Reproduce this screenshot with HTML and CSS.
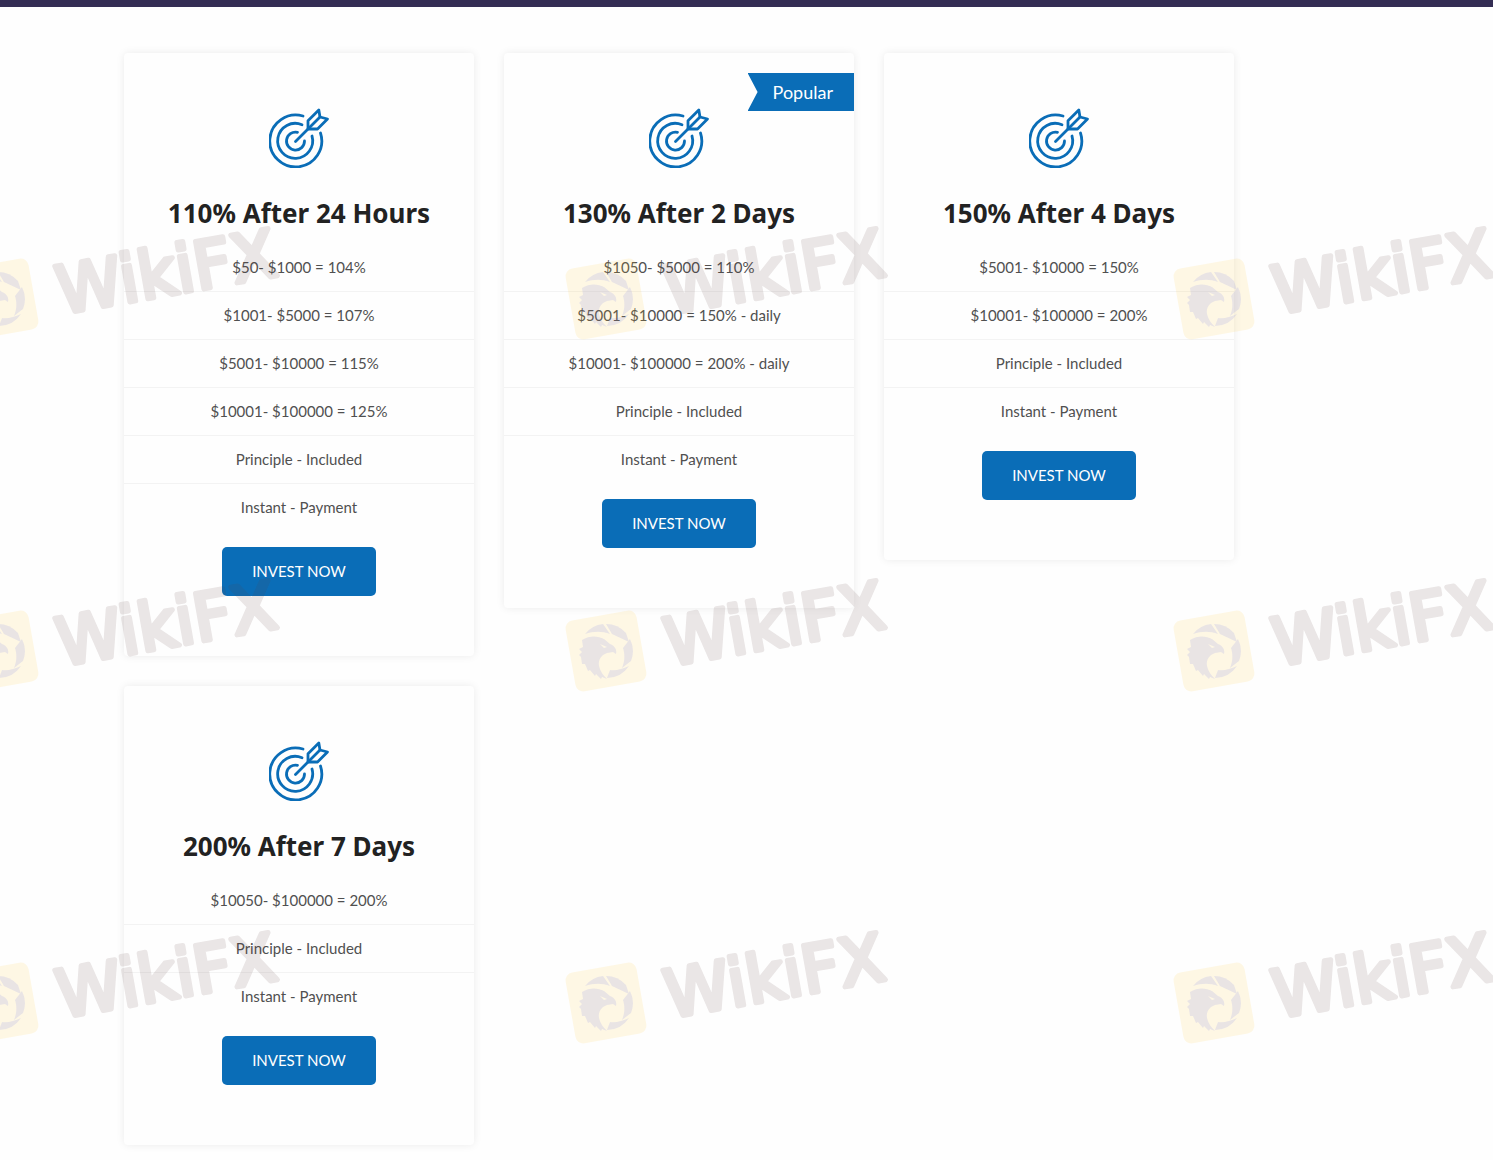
FILE: index.html
```html
<!DOCTYPE html>
<html lang="en">
<head>
  <meta charset="UTF-8">
  <meta name="viewport" content="width=device-width, initial-scale=1.0">
  <title>Investment Plans</title>
  <link rel="stylesheet" href="styles.css">
</head>
<body>

  <!-- shared icon -->
  <svg class="sprite" aria-hidden="true">
    <symbol id="target" viewBox="0 0 60 60">
      <g fill="none" stroke="#0a6db7" stroke-width="2.8" stroke-linecap="round" stroke-linejoin="round">
        <path d="M34 8A26 26 0 1 0 51.500 25"/>
        <path d="M33 16.700A17.500 17.500 0 1 0 43 28"/>
        <path d="M28.500 24.300A9 9 0 1 0 35.500 33"/>
        <path d="M26.500 33.500L50.500 9.500"/>
        <path d="M39 21V12.700L49.800 2L51 9L58.500 11L48.500 21Z"/>
      </g>
    </symbol>
  </svg>

  <header class="top-bar"></header>

  <main class="plans">
    <section class="plan">
      <svg class="plan-icon" aria-hidden="true"><use href="#target"/></svg>
      <h3>110% After 24 Hours</h3>
      <ul>
        <li>$50- $1000 = 104%</li>
        <li>$1001- $5000 = 107%</li>
        <li>$5001- $10000 = 115%</li>
        <li>$10001- $100000 = 125%</li>
        <li>Principle - Included</li>
        <li>Instant - Payment</li>
      </ul>
      <a href="#" class="btn">INVEST NOW</a>
    </section>

    <section class="plan">
      <span class="ribbon">Popular</span>
      <svg class="plan-icon" aria-hidden="true"><use href="#target"/></svg>
      <h3>130% After 2 Days</h3>
      <ul>
        <li>$1050- $5000 = 110%</li>
        <li>$5001- $10000 = 150% - daily</li>
        <li>$10001- $100000 = 200% - daily</li>
        <li>Principle - Included</li>
        <li>Instant - Payment</li>
      </ul>
      <a href="#" class="btn">INVEST NOW</a>
    </section>

    <section class="plan">
      <svg class="plan-icon" aria-hidden="true"><use href="#target"/></svg>
      <h3>150% After 4 Days</h3>
      <ul>
        <li>$5001- $10000 = 150%</li>
        <li>$10001- $100000 = 200%</li>
        <li>Principle - Included</li>
        <li>Instant - Payment</li>
      </ul>
      <a href="#" class="btn">INVEST NOW</a>
    </section>

    <section class="plan">
      <svg class="plan-icon" aria-hidden="true"><use href="#target"/></svg>
      <h3>200% After 7 Days</h3>
      <ul>
        <li>$10050- $100000 = 200%</li>
        <li>Principle - Included</li>
        <li>Instant - Payment</li>
      </ul>
      <a href="#" class="btn">INVEST NOW</a>
    </section>
  </main>

  <!-- watermark over the whole page -->
  <svg class="watermark" aria-hidden="true">
    <defs>
      <pattern id="mark" x="560" y="200" width="608" height="352" patternUnits="userSpaceOnUse">
        <g transform="translate(46 99)">
          <rect class="mark-tile" x="-36" y="-36" width="72" height="72" rx="8" transform="rotate(-10)"/>
          <g class="mark-bird">
            <path d="M-21 -17A27 27 0 0 1 -3 -27L4 -17C-4 -20 -12 -20 -21 -17Z"/>
            <path d="M0 -27A27 27 0 0 1 20 -18L23 -9L6 -17Z"/>
            <path d="M24 -12A27 27 0 0 1 25 10L16 17C19 10 19 3 17 -3Z"/>
            <path d="M23 15A27 27 0 0 1 1 27L4 19C10 20 16 18 23 15Z"/>
            <path fill-rule="evenodd" d="M-24 -11C-16 -16 -8 -15 -2 -12L4 -7C9 -5 11 -1 10 3L7 1L1 2C-5 4 -8 9 -7 15C-6 20 -3 24 1 28L-4 26L-5 28L-10 23L-11 25L-16 19L-18 20L-21 13L-24 13L-25 6L-27 4L-24 1L-27 -2L-23 -4ZM-6 -7L1 -4L-2 -3Z"/>
          </g>
        </g>
        <text class="mark-text" transform="translate(109 114) rotate(-10)">WikiFX</text>
      </pattern>
    </defs>
    <rect width="100%" height="100%" fill="url(#mark)"/>
  </svg>

</body>
</html>
```
FILE: styles.css
```css
* {
  box-sizing: border-box;
}

body {
  position: relative;
  margin: 0;
  background: #fefefe;
  color: #505050;
  font-family: Lato, "Liberation Sans", sans-serif;
  font-size: 15px;
  line-height: 24px;
}

.sprite {
  display: none;
}

.top-bar {
  height: 7px;
  background: #342d54;
}

.plans {
  display: grid;
  grid-template-columns: repeat(auto-fill, 350px);
  gap: 30px;
  align-items: start;
  max-width: 1249px;
  padding: 46px 15px 15px 124px;
}

.plan {
  position: relative;
  padding: 55px 0 60px;
  background: #fefefe;
  border-radius: 4px;
  box-shadow: 0 0 8px rgba(0, 0, 0, 0.08);
  text-align: center;
}

.plan-icon {
  display: block;
  width: 60px;
  height: 60px;
  margin: 0 auto;
}

.plan h3 {
  margin: 27px 0 13px;
  color: #222;
  font-family: "Noto Sans", sans-serif;
  font-size: 26px;
  font-weight: bold;
  line-height: 36px;
}

.plan ul {
  margin: 0 0 15px;
  padding: 0;
  list-style: none;
}

.plan li {
  height: 48px;
  padding: 11px 0;
  border-bottom: 1px solid #f3f3f3;
}

.plan li:last-child {
  border-bottom: none;
}

.btn {
  display: inline-block;
  padding: 12px 30px;
  background: #0a6db7;
  border-radius: 5px;
  color: #fff;
  line-height: 25px;
  text-decoration: none;
  vertical-align: top;
}

.btn:hover {
  background: #085c9f;
}

.ribbon {
  position: absolute;
  top: 20px;
  right: 0;
  padding: 0 21px 0 25px;
  background: #0a6db7;
  clip-path: polygon(0 0, 100% 0, 100% 100%, 0 100%, 10px 50%);
  color: #fff;
  font-size: 18px;
  line-height: 38px;
}

.watermark {
  position: absolute;
  top: 0;
  left: 0;
  width: 100%;
  height: 100%;
  pointer-events: none;
}

.mark-tile {
  fill: #ffc828;
  opacity: 0.12;
}

.mark-bird {
  fill: #2c38e6;
  opacity: 0.1;
}

.mark-text {
  fill: #553232;
  stroke: #553232;
  stroke-width: 5px;
  stroke-linejoin: round;
  opacity: 0.12;
  font-family: "DejaVu Sans", sans-serif;
  font-size: 66px;
}
```
